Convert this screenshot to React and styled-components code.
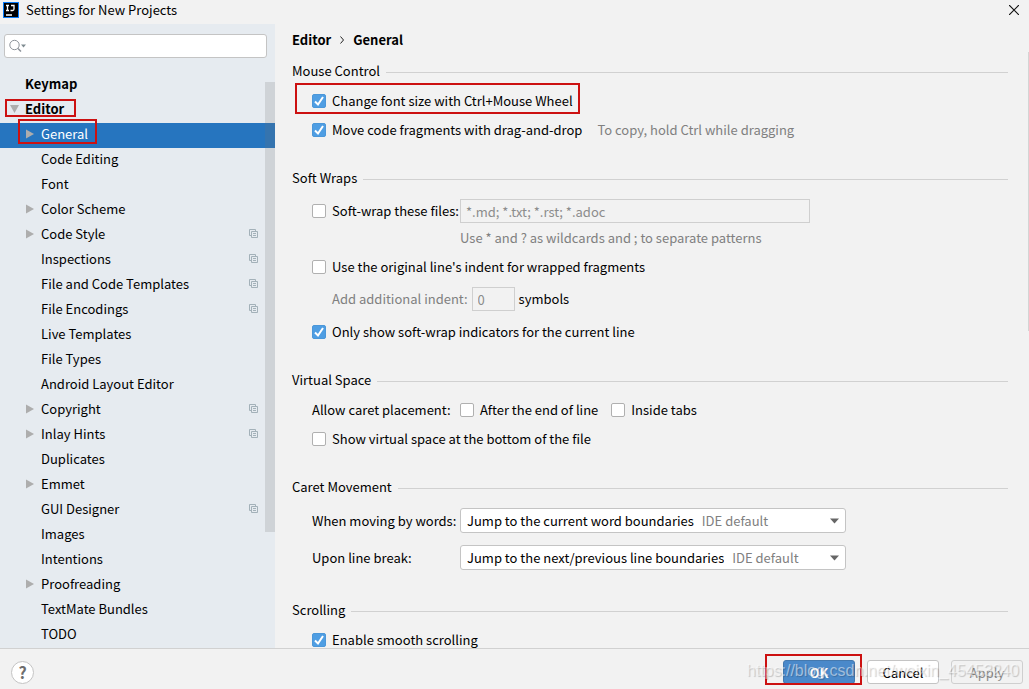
import React, { useState } from "react";
import styled, { createGlobalStyle, css } from "styled-components";

const GlobalStyle = createGlobalStyle`
  * {
    box-sizing: border-box;
  }

  body {
    margin: 0;
    background-color: #f2f2f2;
    color: #000;
    font-family: "Noto Sans CJK SC", "Open Sans", sans-serif;
    font-size: 13px;
    line-height: 20px;
  }

  button, input, select {
    font: inherit;
    color: inherit;
  }
`;

const Window = styled.div`
  display: flex;
  flex-direction: column;
  height: 100vh;
  overflow: hidden;
`;

const TitleBar = styled.header`
  display: flex;
  align-items: center;
  gap: 7px;
  flex: none;
  height: 24px;
  padding: 0 8px 4px 3px;
`;

const WindowTitle = styled.h1`
  flex: 1;
  margin: 0;
  font-size: 13px;
  font-weight: 400;
`;

const CloseButton = styled.button`
  display: flex;
  padding: 2px;
  border: none;
  background: none;
`;

const Body = styled.div`
  display: flex;
  flex: 1;
  min-height: 0;
`;

const Sidebar = styled.aside`
  position: relative;
  display: flex;
  flex-direction: column;
  flex: none;
  width: 275px;
  background-color: #e6ebf0;
`;

const SearchBox = styled.label`
  display: flex;
  align-items: center;
  flex: none;
  height: 24px;
  margin: 10px 8px 15px 4px;
  padding: 0 4px;
  border: 1px solid #c4c4c4;
  border-radius: 3px;
  background-color: #fff;
`;

const SearchInput = styled.input`
  flex: 1;
  min-width: 0;
  padding: 0 4px;
  border: none;
  outline: none;
  background: none;
`;

const Tree = styled.ul`
  flex: 1;
  min-height: 0;
  margin: 0;
  padding: 0;
  overflow: hidden;
  list-style: none;
`;

const TreeRow = styled.li`
  position: relative;
  display: flex;
  align-items: center;
  height: 25px;
  padding: 0 16px 3px ${(props) => (props.$level ? 25 : 9)}px;
  font-weight: ${(props) => (props.$level ? 400 : 700)};
  ${(props) =>
    props.$selected &&
    css`
      background-color: #2675bf;
      color: #fff;
    `}
`;

const Toggle = styled.span`
  display: flex;
  align-items: center;
  flex: none;
  width: 16px;
`;

const TreeLabel = styled.span`
  flex: 1;
  white-space: nowrap;
`;

const Scrollbar = styled.div`
  position: absolute;
  top: 58px;
  right: 0;
  width: 10px;
  height: 450px;
  background-color: rgba(115, 115, 115, 0.2);
`;

const Content = styled.main`
  position: relative;
  flex: 1;
  min-width: 0;
  padding: 6px 21px 0 17px;
  overflow: hidden;
  white-space: nowrap;
`;

const ContentScrollbar = styled.div`
  position: absolute;
  top: 28px;
  right: 0;
  width: 1px;
  height: 279px;
  background-color: #d4d4d4;
`;

const Breadcrumb = styled.nav`
  display: flex;
  align-items: center;
  gap: 9px;
  margin-bottom: 11px;
  font-weight: 700;
`;

const Section = styled.section`
  margin-bottom: ${(props) => props.$space || 28}px;
`;

const SectionTitle = styled.h2`
  display: flex;
  align-items: center;
  gap: 6px;
  margin: 0;
  font-size: 13px;
  font-weight: 400;

  &::after {
    content: "";
    flex: 1;
    height: 1px;
    margin-top: 2px;
    background-color: #d1d1d1;
  }
`;

const Row = styled.div`
  position: relative;
  display: flex;
  align-items: center;
  gap: ${(props) => props.$gap || 6}px;
  margin-top: ${(props) => props.$top || 9}px;
  padding-left: ${(props) => props.$indent || 20}px;
`;

const CheckGroup = styled.div`
  display: flex;
  gap: 13px;
`;

const FieldLabel = styled.div`
  flex: none;
  width: 142px;
`;

const CheckLabel = styled.label`
  position: relative;
  display: flex;
  align-items: center;
  gap: 6px;
`;

const CheckInput = styled.input`
  appearance: none;
  flex: none;
  width: 14px;
  height: 14px;
  margin: 0;
  border: 1px solid #b0b0b0;
  border-radius: 2px;
  background-color: #fff;

  &:checked {
    border-color: #4b97d9;
    background-color: #4f9ee3;
  }
`;

const CheckMark = styled.svg`
  position: absolute;
  left: 0;
  pointer-events: none;
`;

const Hint = styled.span`
  color: #808080;
`;

const TextField = styled.input`
  width: ${(props) => props.$width}px;
  height: 24px;
  padding: 0 5px;
  border: 1px solid #cfcfcf;
  background-color: #f2f2f2;

  &:disabled {
    color: #8c8c8c;
  }
`;

const Combo = styled.div`
  display: flex;
  align-items: center;
  width: 386px;
  height: 25px;
  padding: 0 6px;
  border: 1px solid #c4c4c4;
  border-radius: 3px;
  background-color: #fff;
`;

const ComboSelect = styled.select`
  appearance: none;
  field-sizing: content;
  margin-right: 8px;
  padding: 0;
  border: none;
  outline: none;
  background: none;
`;

const ComboArrow = styled.svg`
  margin-left: auto;
`;

const Footer = styled.footer`
  position: relative;
  display: flex;
  align-items: center;
  gap: 12px;
  flex: none;
  height: 41px;
  padding: 6px 6px 0 11px;
  border-top: 1px solid #d1d1d1;
`;

const HelpButton = styled.button`
  width: 23px;
  height: 23px;
  margin-right: auto;
  padding: 0;
  border: 1px solid #c4c4c4;
  border-radius: 50%;
  background-color: #fff;
  color: #6e6e6e;
  font-size: 16px;
  font-weight: 700;
  line-height: 20px;
`;

const Button = styled.button`
  position: relative;
  width: 72px;
  height: 24px;
  padding: 2px 0 0;
  border: 1px solid #c4c4c4;
  border-radius: 3px;
  background-color: #fff;

  &:disabled {
    border-color: #cfcfcf;
    background-color: #f2f2f2;
    color: #8c8c8c;
  }

  ${(props) =>
    props.$primary &&
    css`
      border-color: #4478ad;
      background-color: #4a89ca;
      color: #fff;
      font-weight: 700;
    `}
`;

// Red frame laid over the element it points out
const Highlight = styled.span`
  position: absolute;
  top: ${(props) => props.$top}px;
  left: ${(props) => props.$left}px;
  width: ${(props) => props.$width}px;
  height: ${(props) => props.$height}px;
  border: 2px solid #cc1111;
  pointer-events: none;
`;

const Watermark = styled.div`
  position: absolute;
  right: 10px;
  bottom: 8px;
  color: rgba(255, 255, 255, 0.5);
  font-family: "Liberation Sans", Arial, sans-serif;
  font-size: 16px;
  text-shadow: 1px 1px 1px rgba(0, 0, 0, 0.2);
  pointer-events: none;
`;

const treeItems = [
  { name: "Keymap", level: 0 },
  { name: "Editor", level: 0, open: true, frame: { top: 1, left: 5, width: 71, height: 18 } },
  { name: "General", level: 1, closed: true, frame: { top: -4, left: 18, width: 79, height: 25 } },
  { name: "Code Editing", level: 1 },
  { name: "Font", level: 1 },
  { name: "Color Scheme", level: 1, closed: true },
  { name: "Code Style", level: 1, closed: true, project: true },
  { name: "Inspections", level: 1, project: true },
  { name: "File and Code Templates", level: 1, project: true },
  { name: "File Encodings", level: 1, project: true },
  { name: "Live Templates", level: 1 },
  { name: "File Types", level: 1 },
  { name: "Android Layout Editor", level: 1 },
  { name: "Copyright", level: 1, closed: true, project: true },
  { name: "Inlay Hints", level: 1, closed: true, project: true },
  { name: "Duplicates", level: 1 },
  { name: "Emmet", level: 1, closed: true },
  { name: "GUI Designer", level: 1, project: true },
  { name: "Images", level: 1 },
  { name: "Intentions", level: 1 },
  { name: "Proofreading", level: 1, closed: true },
  { name: "TextMate Bundles", level: 1 },
  { name: "TODO", level: 1 },
];

const Frame = ({ top, left, width, height }) => (
  <Highlight $top={top} $left={left} $width={width} $height={height} />
);

const AppLogo = () => (
  <svg width="16" height="16" viewBox="0 0 16 16" aria-hidden="true">
    <rect width="16" height="16" fill="#087cfa" />
    <rect x="1" y="1" width="14" height="14" fill="#000" />
    <path
      d="M3 3.5h3M4.5 3.5v5M3 8.5h3M8 3.5h3v3.5q0 1.5-1.5 1.5H7.5M3 13h6"
      fill="none"
      stroke="#fff"
      strokeWidth="1.3"
    />
  </svg>
);

const CloseIcon = () => (
  <svg width="10" height="10" viewBox="0 0 10 10" aria-hidden="true">
    <path d="M0 0l10 10M10 0L0 10" stroke="#111" strokeWidth="1.2" />
  </svg>
);

const SearchIcon = () => (
  <svg width="17" height="14" viewBox="0 0 17 14" aria-hidden="true">
    <circle cx="5.5" cy="6" r="4.7" fill="none" stroke="#8c9299" />
    <path d="M9 9.5l3 3" stroke="#8c9299" strokeWidth="1.5" />
    <path d="M12 5.5h5l-2.5 3z" fill="#7f8b91" />
  </svg>
);

const ClosedArrow = () => (
  <svg width="9" height="10" viewBox="0 0 9 10" aria-hidden="true">
    <path d="M1 .5l8 4.5-8 4.5z" fill="#adadad" />
  </svg>
);

const OpenArrow = () => (
  <svg width="10" height="9" viewBox="0 0 10 9" aria-hidden="true">
    <path d="M1 0h9L5.5 8z" fill="#adadad" />
  </svg>
);

const ProjectIcon = () => (
  <svg width="10" height="10" viewBox="0 0 10 10" aria-hidden="true">
    <path
      d="M2.5 6.5h-2v-6h6v2M2.5 2.5h6v6h-6zM4 4.5h3M4 6.5h3"
      fill="none"
      stroke="#a3b1b9"
    />
  </svg>
);

const Checkbox = ({ label, defaultChecked = false }) => {
  const [checked, setChecked] = useState(defaultChecked);

  return (
    <CheckLabel>
      <CheckInput
        type="checkbox"
        checked={checked}
        onChange={(e) => setChecked(e.target.checked)}
      />
      {checked && (
        <CheckMark width="14" height="14" viewBox="0 0 14 14">
          <path d="M3 7.5l3 3 5-7.5" fill="none" stroke="#fff" strokeWidth="2" />
        </CheckMark>
      )}
      {label}
    </CheckLabel>
  );
};

const ComboBox = ({ id, options }) => (
  <Combo>
    <ComboSelect id={id}>
      {options.map((option) => (
        <option key={option}>{option}</option>
      ))}
    </ComboSelect>
    <Hint>IDE default</Hint>
    <ComboArrow width="9" height="6" viewBox="0 0 9 6" aria-hidden="true">
      <path d="M0 .5h9L4.5 5.5z" fill="#666" />
    </ComboArrow>
  </Combo>
);

const SettingsTree = () => {
  const [selected, setSelected] = useState("General");

  return (
    <Tree>
      {treeItems.map((item) => (
        <TreeRow
          key={item.name}
          $level={item.level}
          $selected={item.name === selected}
          onClick={() => setSelected(item.name)}
        >
          <Toggle>
            {item.open && <OpenArrow />}
            {item.closed && <ClosedArrow />}
          </Toggle>
          <TreeLabel>{item.name}</TreeLabel>
          {item.project && <ProjectIcon />}
          {item.frame && <Frame {...item.frame} />}
        </TreeRow>
      ))}
    </Tree>
  );
};

const App = () => {
  return (
    <Window>
      <GlobalStyle />
      <TitleBar>
        <AppLogo />
        <WindowTitle>Settings for New Projects</WindowTitle>
        <CloseButton type="button" aria-label="Close">
          <CloseIcon />
        </CloseButton>
      </TitleBar>
      <Body>
        <Sidebar>
          <SearchBox>
            <SearchIcon />
            <SearchInput type="text" aria-label="Search settings" />
          </SearchBox>
          <SettingsTree />
          <Scrollbar />
        </Sidebar>
        <Content>
          <Breadcrumb>
            <span>Editor</span>
            <svg width="4" height="8" viewBox="0 0 4 8" aria-hidden="true">
              <path d="M.5.5L3.5 4l-3 3.5" fill="none" stroke="#222" />
            </svg>
            <span>General</span>
          </Breadcrumb>

          <Section>
            <SectionTitle>Mouse Control</SectionTitle>
            <Row $top={10}>
              <Checkbox label="Change font size with Ctrl+Mouse Wheel" defaultChecked />
              <Frame top={-8} left={3} width={285} height={31} />
            </Row>
            <Row $gap={15}>
              <Checkbox label="Move code fragments with drag-and-drop" defaultChecked />
              <Hint>To copy, hold Ctrl while dragging</Hint>
            </Row>
          </Section>

          <Section>
            <SectionTitle>Soft Wraps</SectionTitle>
            <Row $top={11}>
              <FieldLabel>
                <Checkbox label="Soft-wrap these files:" />
              </FieldLabel>
              <TextField
                $width={350}
                aria-label="Soft-wrap file patterns"
                defaultValue="*.md; *.txt; *.rst; *.adoc"
                disabled
              />
            </Row>
            <Row $top={5} $indent={168}>
              <Hint>Use * and ? as wildcards and ; to separate patterns</Hint>
            </Row>
            <Row>
              <Checkbox label="Use the original line's indent for wrapped fragments" />
            </Row>
            <Row $top={10} $gap={4} $indent={40}>
              <Hint as="label" htmlFor="indent">
                Add additional indent:
              </Hint>
              <TextField id="indent" $width={43} defaultValue="0" disabled />
              <span>symbols</span>
            </Row>
            <Row $top={11}>
              <Checkbox
                label="Only show soft-wrap indicators for the current line"
                defaultChecked
              />
            </Row>
          </Section>

          <Section>
            <SectionTitle>Virtual Space</SectionTitle>
            <Row $top={10}>
              <FieldLabel>Allow caret placement:</FieldLabel>
              <CheckGroup>
                <Checkbox label="After the end of line" />
                <Checkbox label="Inside tabs" />
              </CheckGroup>
            </Row>
            <Row>
              <Checkbox label="Show virtual space at the bottom of the file" />
            </Row>
          </Section>

          <Section $space={30}>
            <SectionTitle>Caret Movement</SectionTitle>
            <Row $top={11}>
              <FieldLabel as="label" htmlFor="by-words">
                When moving by words:
              </FieldLabel>
              <ComboBox
                id="by-words"
                options={["Jump to the current word boundaries", "Jump to the word start"]}
              />
            </Row>
            <Row $top={12}>
              <FieldLabel as="label" htmlFor="line-break">
                Upon line break:
              </FieldLabel>
              <ComboBox
                id="line-break"
                options={["Jump to the next/previous line boundaries", "Stay on the current line"]}
              />
            </Row>
          </Section>

          <Section>
            <SectionTitle>Scrolling</SectionTitle>
            <Row $top={10}>
              <Checkbox label="Enable smooth scrolling" defaultChecked />
            </Row>
          </Section>
          <ContentScrollbar />
        </Content>
      </Body>
      <Footer>
        <HelpButton type="button" aria-label="Help">
          ?
        </HelpButton>
        <Button type="button" $primary>
          OK
          <Frame top={-7} left={-19} width={97} height={31} />
        </Button>
        <Button type="button">Cancel</Button>
        <Button type="button" disabled>
          Apply
        </Button>
        <Watermark>https://blog.csdn.net/weixin_45453240</Watermark>
      </Footer>
    </Window>
  );
};

export default App;
